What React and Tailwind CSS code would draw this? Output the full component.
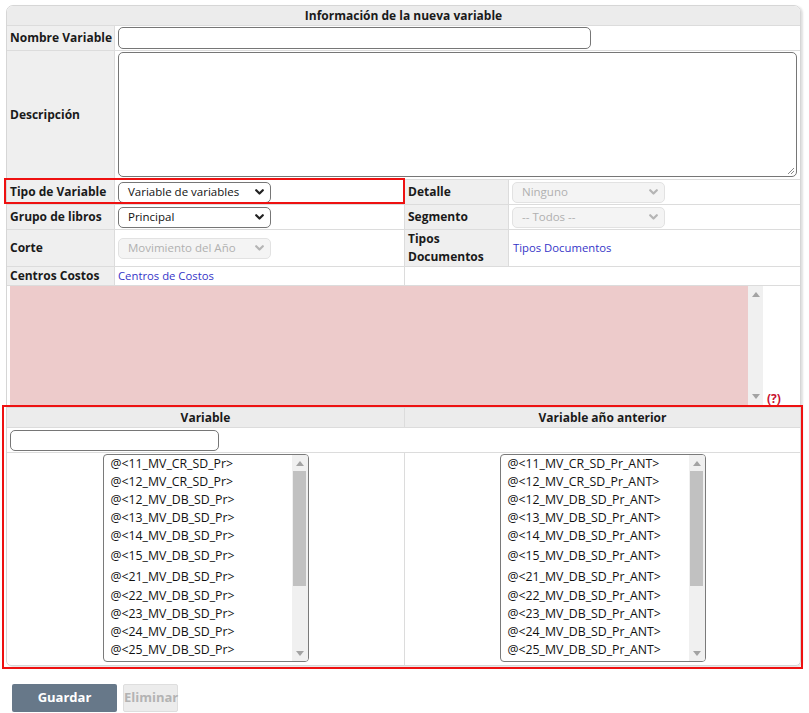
import React from "react";

const Chevron = ({ color = "#222" }) => (
  <svg width="9" height="6" viewBox="0 0 9 6" className="shrink-0">
    <path d="M1.2 1.2 L4.5 4.5 L7.8 1.2" fill="none" stroke={color} strokeWidth="2.2" strokeLinecap="round" strokeLinejoin="round" />
  </svg>
);

const Select = ({ text, disabled, w = "w-[153px]" }) => (
  <div
    className={`${w} h-[21px] rounded-[5px] border flex items-center justify-between pl-[9px] pr-[6px] text-[11.5px] ${
      disabled ? "bg-[#f4f4f4] border-[#e2e2e2] text-[#b0b0b0]" : "bg-white border-[#767676] text-[#111]"
    }`}
  >
    <span className="leading-none">{text}</span>
    <Chevron color={disabled ? "#b5b5b5" : "#222"} />
  </div>
);

const Label = ({ children, className = "" }) => (
  <div className={`bg-[#efefef] border-r border-[#dcdcdc] flex items-center pl-[3px] text-[12px] font-bold text-[#1a1a1a] leading-[18px] ${className}`}>
    {children}
  </div>
);

const Up = () => (
  <svg width="8" height="5" viewBox="0 0 8 5"><path d="M0 5 L4 0 L8 5Z" fill="#a3a3a3" /></svg>
);
const Down = () => (
  <svg width="8" height="5" viewBox="0 0 8 5"><path d="M0 0 L4 5 L8 0Z" fill="#a3a3a3" /></svg>
);

const heights = [18, 18, 18, 18, 19, 21, 20, 18, 18, 18, 19];
const names = ["11_MV_CR", "12_MV_CR", "12_MV_DB", "13_MV_DB", "14_MV_DB", "15_MV_DB", "21_MV_DB", "22_MV_DB", "23_MV_DB", "24_MV_DB", "25_MV_DB"];

const ListBox = ({ suffix }) => (
  <div className="w-[206px] h-[208px] rounded-[4px] border border-[#7a7a7a] bg-white flex overflow-hidden">
    <div className="flex-1 pl-[7px] text-[12.3px] text-[#111]">
      {names.map((n, i) => (
        <div key={n} className="flex items-center whitespace-nowrap" style={{ height: heights[i] }}>
          {`@<${n}_SD_Pr${suffix}>`}
        </div>
      ))}
    </div>
    <div className="w-[16px] bg-[#f0f0f0] flex flex-col items-center">
      <div className="h-[16px] flex items-center justify-center"><Up /></div>
      <div className="w-[13px] h-[115px] bg-[#c1c1c1]" />
      <div className="flex-1" />
      <div className="h-[16px] flex items-center justify-center"><Down /></div>
    </div>
  </div>
);

export default function App() {
  return (
    <div className="relative w-[809px] h-[713px] bg-white" style={{ fontFamily: '"Open Sans", "Noto Sans", sans-serif' }}>
      <div className="pl-[6px] pt-[5px]">
        <div className="w-[795px] border border-[#d6d6d6] rounded-t-[7px] rounded-b-[5px] shadow-[2px_1px_2px_rgba(0,0,0,0.12)] overflow-hidden">
          {/* header */}
          <div className="h-[20px] bg-[#ececec] border-b border-[#dcdcdc] flex items-center justify-center text-[12px] font-bold text-[#1a1a1a]">
            Información de la nueva variable
          </div>
          {/* Nombre */}
          <div className="h-[25px] grid grid-cols-[108px_1fr] border-b border-[#dcdcdc]">
            <Label>Nombre Variable</Label>
            <div className="flex items-center pl-[3px]">
              <div className="w-[473px] h-[22px] rounded-[5px] border border-[#767676] bg-white" />
            </div>
          </div>
          {/* Descripcion */}
          <div className="h-[129px] grid grid-cols-[108px_1fr] border-b border-[#dcdcdc]">
            <Label>Descripción</Label>
            <div className="flex items-start pt-[1px] pl-[3px] pr-[3px]">
              <div className="relative w-full h-[125px] rounded-[5px] border border-[#767676] bg-white">
                <svg className="absolute right-[1px] bottom-[1px]" width="9" height="9" viewBox="0 0 9 9">
                  <path d="M8 2 L2 8 M8 5 L5 8" stroke="#8a8a8a" strokeWidth="1" />
                </svg>
              </div>
            </div>
          </div>
          {/* 4 column rows */}
          <div className="grid grid-cols-[108px_290px_104px_1fr]">
            <Label className="h-[25px] border-b border-b-[#dcdcdc]">Tipo de Variable</Label>
            <div className="h-[25px] border-b border-r border-[#dcdcdc] flex items-center pl-[3px]">
              <Select text="Variable de variables" />
            </div>
            <Label className="h-[25px] border-b border-b-[#dcdcdc]">Detalle</Label>
            <div className="h-[25px] border-b border-[#dcdcdc] flex items-center pl-[3px]">
              <Select text="Ninguno" disabled />
            </div>

            <Label className="h-[25px] border-b border-b-[#dcdcdc]">Grupo de libros</Label>
            <div className="h-[25px] border-b border-r border-[#dcdcdc] flex items-center pl-[3px]">
              <Select text="Principal" />
            </div>
            <Label className="h-[25px] border-b border-b-[#dcdcdc]">Segmento</Label>
            <div className="h-[25px] border-b border-[#dcdcdc] flex items-center pl-[3px]">
              <Select text="-- Todos --" disabled />
            </div>

            <Label className="h-[37px] border-b border-b-[#dcdcdc]">Corte</Label>
            <div className="h-[37px] border-b border-r border-[#dcdcdc] flex items-center pl-[3px]">
              <Select text="Movimiento del Año" disabled />
            </div>
            <Label className="h-[37px] border-b border-b-[#dcdcdc]">
              <span>Tipos<br />Documentos</span>
            </Label>
            <div className="h-[37px] border-b border-[#dcdcdc] flex items-center pl-[4px] text-[11.3px] text-[#3535c8]">
              Tipos Documentos
            </div>

            <Label className="h-[19px] border-b border-b-[#dcdcdc]">Centros Costos</Label>
            <div className="h-[19px] border-b border-r border-[#dcdcdc] flex items-center pl-[3px] text-[11.3px] text-[#3535c8]">
              Centros de Costos
            </div>
            <div className="h-[19px] border-b border-[#dcdcdc] col-span-2" />
          </div>
          {/* pink area */}
          <div className="h-[121px] flex items-start pl-[3px]">
            <div className="w-[738px] h-[119px] bg-[#edcbcb]" />
            <div className="w-[15px] h-[119px] bg-[#f0f0f0] flex flex-col items-center justify-between py-[6px]">
              <Up />
              <Down />
            </div>
            <div className="self-end pl-[4px] text-[12px] font-bold text-[#c8102e] leading-[16px]">(?)</div>
          </div>
          {/* variables section */}
          <div className="border-t border-[#dcdcdc]">
            <div className="h-[20px] grid grid-cols-[398px_1fr] bg-[#ececec] border-b border-[#dcdcdc] text-[12px] font-bold text-[#1a1a1a]">
              <div className="flex items-center justify-center border-r border-[#dcdcdc]">Variable</div>
              <div className="flex items-center justify-center">Variable año anterior</div>
            </div>
            <div className="h-[25px] border-b border-[#dcdcdc] flex items-center pl-[3px]">
              <div className="w-[209px] h-[21px] rounded-[5px] border border-[#767676] bg-white" />
            </div>
            <div className="h-[212px] grid grid-cols-[398px_1fr]">
              <div className="border-r border-[#dcdcdc] flex justify-center pt-[1px]">
                <ListBox suffix="" />
              </div>
              <div className="flex justify-center pt-[1px]">
                <ListBox suffix="_ANT" />
              </div>
            </div>
          </div>
        </div>
      </div>
      {/* buttons */}
      <div className="flex gap-[6px] pl-[12px] pt-[18px]">
        <button className="w-[105px] h-[28px] rounded-[2px] bg-[#677889] text-white text-[13px] font-bold">Guardar</button>
        <button className="w-[55px] h-[28px] rounded-[2px] bg-[#ececec] border border-[#dedede] text-[#b3b3b3] text-[13px] font-bold">Eliminar</button>
      </div>
      {/* annotation boxes */}
      <div className="absolute left-[4px] top-[178px] w-[401px] h-[26px] border-2 border-[#ee1111] pointer-events-none" />
      <div className="absolute left-[2px] top-[405px] w-[801px] h-[264px] border-2 border-[#ee1111] pointer-events-none" />
    </div>
  );
}
